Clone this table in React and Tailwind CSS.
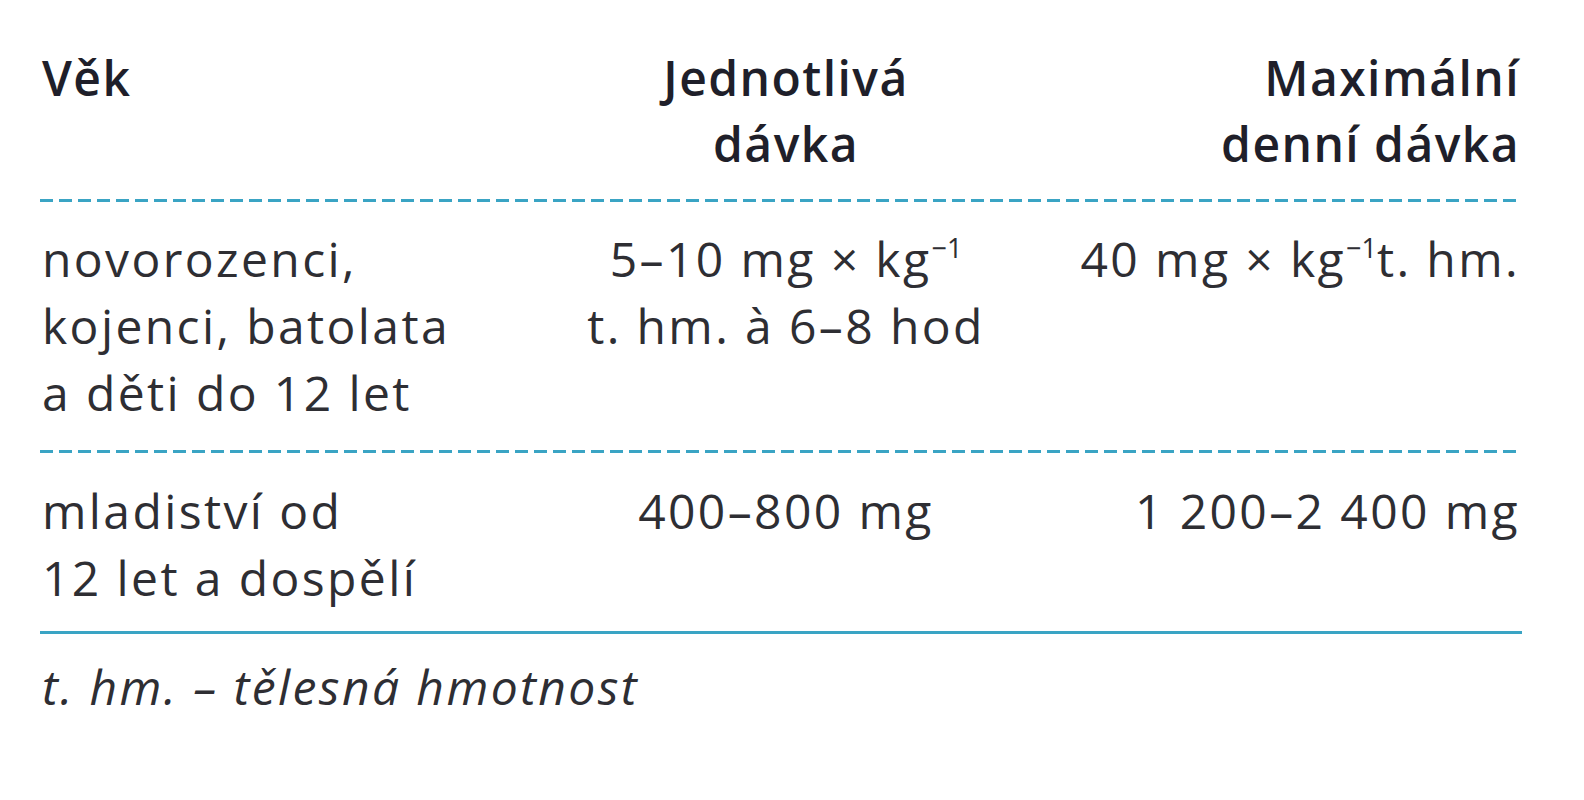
const dashed =
  "h-[3px] w-full bg-[repeating-linear-gradient(90deg,#3aa4c4_0px,#3aa4c4_13px,transparent_13px,transparent_19px)]";

function Kg() {
  return (
    <>
      kg<sup className="text-[27px] -top-[0.7em] tracking-normal">−1</sup>
    </>
  );
}

export default function App() {
  return (
    <div
      className="w-[1584px] h-[800px] bg-white text-[#2e2e33] text-[48px] leading-[67px] tracking-[0.05em]"
      style={{ fontFamily: '"Open Sans", "Noto Sans", sans-serif' }}
    >
      <div className="ml-[40px] w-[1482px] pt-[45px]">
        {/* header */}
        <div className="grid grid-cols-[500px_492px_1fr] font-semibold text-[#1f1f2a] tracking-[0.03em] leading-[66px] pb-[22px]">
          <div className="pl-[2px]">Věk</div>
          <div className="text-center">
            Jednotlivá
            <br />
            dávka
          </div>
          <div className="text-right pr-[2px]">
            Maximální
            <br />
            denní dávka
          </div>
        </div>
        <div className={dashed} />

        {/* row 1 */}
        <div className="grid grid-cols-[500px_492px_1fr] pt-[23px] pb-[24px]">
          <div className="pl-[2px]">
            novorozenci,
            <br />
            kojenci, batolata
            <br />a děti do 12 let
          </div>
          <div className="text-center">
            5–10 mg × <Kg />
            <br />
            t. hm. à 6–8 hod
          </div>
          <div className="text-right pr-[2px]">
            40 mg × <Kg />t. hm.
          </div>
        </div>
        <div className={dashed} />

        {/* row 2 */}
        <div className="grid grid-cols-[500px_492px_1fr] pt-[24px] pb-[20px]">
          <div className="pl-[2px]">
            mladiství od
            <br />
            12 let a dospělí
          </div>
          <div className="text-center">400–800 mg</div>
          <div className="text-right pr-[2px]">1 200–2 400 mg</div>
        </div>
        <div className="h-[3px] w-full bg-[#3aa4c4]" />

        {/* note */}
        <div className="pt-[19px] pl-[2px] italic">t. hm. – tělesná hmotnost</div>
      </div>
    </div>
  );
}
